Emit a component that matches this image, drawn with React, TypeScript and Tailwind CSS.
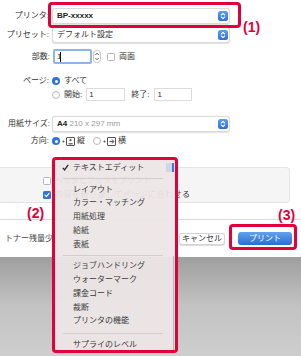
import React from "react";

const font = "font-['Liberation_Sans','Noto_Sans_CJK_JP',sans-serif]";

function BlueArrows() {
  return (
    <span className="flex h-[10px] w-[10px] items-center justify-center rounded-[2.5px] bg-gradient-to-b from-[#5d9ff0] to-[#2c6ed6]">
      <svg width="6" height="8" viewBox="0 0 6 8" fill="none" stroke="white" strokeWidth="1.1" strokeLinecap="round" strokeLinejoin="round">
        <path d="M1.3 3 L3 1.4 L4.7 3" />
        <path d="M1.3 5 L3 6.6 L4.7 5" />
      </svg>
    </span>
  );
}

function Select({ children }: { children: React.ReactNode }) {
  return (
    <div className="flex h-[16px] w-[178px] items-center justify-between rounded-[3px] border border-[#dadada] bg-white pl-[4px] pr-[1px] shadow-[0_0.5px_1px_rgba(0,0,0,0.12)]">
      <span className="leading-none">{children}</span>
      <BlueArrows />
    </div>
  );
}

function Radio({ on }: { on?: boolean }) {
  return on ? (
    <span className="flex h-[8px] w-[8px] shrink-0 items-center justify-center rounded-full bg-[#2f73da]">
      <span className="block h-[3px] w-[3px] rounded-full bg-white" />
    </span>
  ) : (
    <span className="block h-[8px] w-[8px] shrink-0 rounded-full border border-[#b9b9b9] bg-white" />
  );
}

function Check({ on }: { on?: boolean }) {
  return on ? (
    <span className="flex h-[8px] w-[8px] shrink-0 items-center justify-center rounded-[1.5px] bg-[#2f73da]">
      <svg width="6" height="6" viewBox="0 0 6 6" fill="none" stroke="white" strokeWidth="1.2" strokeLinecap="round" strokeLinejoin="round">
        <path d="M1 3.2 L2.4 4.6 L5 1.3" />
      </svg>
    </span>
  ) : (
    <span className="block h-[8px] w-[8px] shrink-0 rounded-[1.5px] border border-[#b5b5b5] bg-white" />
  );
}

function Orient({ land }: { land?: boolean }) {
  return (
    <svg className="block" width="13" height="9" viewBox="0 0 13 9" fill="none">
      <circle cx="1.5" cy="4.5" r="1" fill="#555" />
      <rect x="4.5" y="0.5" width="8" height="8" rx="0.5" stroke="#555" strokeWidth="1" />
      {land ? (
        <>
          <path d="M6.5 4.5 H10.5" stroke="#555" strokeWidth="1.2" />
          <path d="M9 2.5 L10.8 4.5 L9 6.5" stroke="#555" strokeWidth="1" />
        </>
      ) : (
        <>
          <circle cx="8.5" cy="3.2" r="1.1" fill="#555" />
          <path d="M6.5 6.8 H10.5" stroke="#555" strokeWidth="1.2" />
        </>
      )}
    </svg>
  );
}

const GROUPS = [
  ["レイアウト", "カラー・マッチング", "用紙処理", "給紙", "表紙"],
  ["ジョブハンドリング", "ウォーターマーク", "課金コード", "裁断", "プリンタの機能"],
];

function MenuItem({ children }: { children: React.ReactNode }) {
  return <div className="flex h-[13.75px] items-center pl-[18px]">{children}</div>;
}

function Sep({ h = "h-[8px]" }: { h?: string }) {
  return (
    <div className={`flex items-center ${h}`}>
      <div className="ml-[8px] h-px w-[100px] bg-[#d3cdce]" />
    </div>
  );
}

export default function App() {
  return (
    <div className={`relative h-[356px] w-[301px] overflow-hidden bg-white text-[8px] text-[#333] ${font}`}>
      {/* dialog */}
      <div className="pt-[8px]">
        <div className="flex h-[16px] items-center">
          <span className="w-[49px] shrink-0 text-right">プリンタ:</span>
          <div className="ml-[3px]">
            <Select>
              <span className="font-bold text-[#222]">BP-xxxxx</span>
            </Select>
          </div>
        </div>

        <div className="mt-[3px] flex h-[16px] items-center">
          <span className="w-[49px] shrink-0 text-right">プリセット:</span>
          <div className="ml-[3px]">
            <Select>デフォルト設定</Select>
          </div>
        </div>

        <div className="mt-[6px] flex h-[15px] items-center">
          <span className="w-[50px] shrink-0 text-right">部数:</span>
          <div className="ml-[3px] flex h-[15px] w-[39px] items-center rounded-[2px] border-2 border-[#8db4ee] bg-white pl-[2px]">
            <span className="leading-none">1</span>
            <span className="ml-[-1px] block h-[10px] w-px bg-[#111]" />
          </div>
          <svg className="ml-[1px] block" width="8" height="13" viewBox="0 0 8 13" fill="none">
            <rect x="0.5" y="0.5" width="7" height="12" rx="3" stroke="#c4c4c4" fill="white" />
            <path d="M2.3 5 L4 3.2 L5.7 5" stroke="#555" strokeWidth="0.9" />
            <path d="M2.3 8 L4 9.8 L5.7 8" stroke="#555" strokeWidth="0.9" />
          </svg>
          <div className="ml-[6px]">
            <Check />
          </div>
          <span className="ml-[4px]">両面</span>
        </div>

        <div className="mt-[12px] flex h-[10px] items-center">
          <span className="w-[49px] shrink-0 text-right">ページ:</span>
          <div className="ml-[3px]">
            <Radio on />
          </div>
          <span className="ml-[4px]">すべて</span>
        </div>

        <div className="mt-[2px] flex h-[13px] items-center">
          <div className="ml-[52px]">
            <Radio />
          </div>
          <span className="ml-[4px]">開始:</span>
          <div className="ml-[4px] flex h-[13px] w-[39px] items-center border border-[#dcdcdc] bg-white pl-[2px]">1</div>
          <span className="ml-[6px]">終了:</span>
          <div className="ml-[5px] flex h-[13px] w-[38px] items-center border border-[#dcdcdc] bg-white pl-[2px]">1</div>
        </div>

        <div className="mt-[15px] flex h-[16px] items-center">
          <span className="w-[50px] shrink-0 text-right">用紙サイズ:</span>
          <div className="ml-[2px]">
            <Select>
              <span className="font-bold text-[#222]">A4</span>
              <span className="text-[#9a9a9a]"> 210 x 297 mm</span>
            </Select>
          </div>
        </div>

        <div className="mt-[4px] flex h-[10px] items-center">
          <span className="w-[49px] shrink-0 text-right">方向:</span>
          <div className="ml-[3px]">
            <Radio on />
          </div>
          <div className="ml-[2px]">
            <Orient />
          </div>
          <span className="ml-[2px]">縦</span>
          <div className="ml-[8px]">
            <Radio />
          </div>
          <div className="ml-[2px]">
            <Orient land />
          </div>
          <span className="ml-[2px]">横</span>
        </div>

        <div className="mt-[21px] flex h-[36px] w-[290px] flex-col gap-[6px] rounded-r-[4px] border border-l-0 border-[#e4e4e4] bg-[#f5f5f5] pl-[43px] pt-[9px]">
          <div className="flex h-[8px] items-center gap-[4px]">
            <Check />
            <span className="text-[#555]">ヘッダとフッタをプリント</span>
          </div>
          <div className="flex h-[8px] items-center gap-[4px]">
            <Check on />
            <span className="tracking-[0.5px]">内容を折り返してページに合わせる</span>
          </div>
        </div>

        <div className="mt-[16px] h-px w-full bg-[#dadada]" />

        <div className="flex h-[37px] items-center pl-[5px] pr-[9px]">
          <span className="text-[#444]">トナー残量少</span>
          <div className="ml-auto flex h-[12px] w-[46px] items-center justify-center rounded-[3px] border border-[#d4d4d4] bg-white shadow-[0_0.5px_1px_rgba(0,0,0,0.15)]">
            キャンセル
          </div>
          <div className="ml-[13px] flex h-[13px] w-[54px] items-center justify-center rounded-[3px] bg-gradient-to-b from-[#62a3f0] to-[#2a6cd3] text-white">
            プリント
          </div>
        </div>
      </div>

      {/* desktop behind the sheet */}
      <div className="h-[99px] bg-gradient-to-b from-[#9f9f9f] via-[#c3c3c3] to-[#cecece]" />

      {/* popup menu */}
      <div className="absolute left-[52px] top-[157px] h-[196px] w-[126px] rounded-[4px] border-[3px] border-[#e2003a] bg-[#ece6e7]/[0.94]">
        <div className="relative h-full pt-px text-[#3a3a3a]">
          <div className="flex h-[13.75px] items-center">
            <svg className="ml-[7px] block" width="7" height="7" viewBox="0 0 7 7" fill="none">
              <path d="M0.8 3.8 L2.6 5.9 L6.2 0.8" stroke="#2a2a2a" strokeWidth="1.3" />
            </svg>
            <span className="ml-[4px]">テキストエディット</span>
          </div>
          <Sep />
          {GROUPS[0].map((t) => (
            <MenuItem key={t}>{t}</MenuItem>
          ))}
          <Sep />
          {GROUPS[1].map((t) => (
            <MenuItem key={t}>{t}</MenuItem>
          ))}
          <Sep h="h-[10px]" />
          <MenuItem>サプライのレベル</MenuItem>
          <div className="absolute right-[1px] top-[3px] flex h-[9px] w-[8px] justify-end bg-[#cbd8ec]">
            <span className="block h-full w-[2px] bg-[#3c78d4]" />
          </div>
          <div className="absolute bottom-0 right-[1px] top-[96px] w-px bg-[#bdb7b8]" />
        </div>
      </div>

      {/* annotations */}
      <div className="absolute left-[48px] top-[2px] h-[26px] w-[193px] rounded-[4px] border-[3px] border-[#e2003a]" />
      <div className="absolute left-[229px] top-[224px] h-[26px] w-[68px] rounded-[4px] border-[3px] border-[#e2003a]" />
      <span className="absolute left-[243px] top-[20px] text-[14px] font-bold leading-none text-[#e2003a]">(1)</span>
      <span className="absolute left-[27px] top-[206px] text-[14px] font-bold leading-none text-[#e2003a]">(2)</span>
      <span className="absolute left-[278px] top-[208px] text-[14px] font-bold leading-none text-[#e2003a]">(3)</span>
    </div>
  );
}
